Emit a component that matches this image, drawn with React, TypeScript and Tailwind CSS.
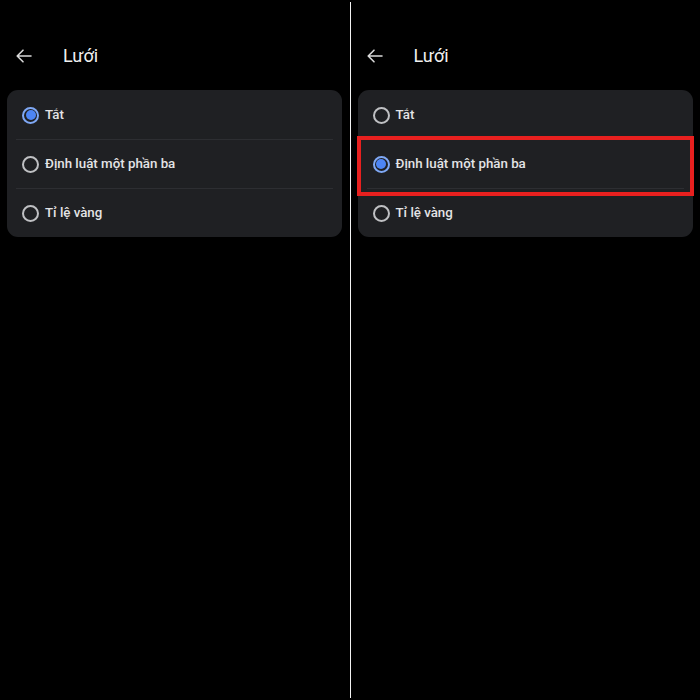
import React from "react";

function Radio({ checked }: { checked: boolean }) {
  if (checked) {
    return (
      <span className="flex h-[17px] w-[17px] shrink-0 items-center justify-center rounded-full border-2 border-[#7fa8f5]">
        <span className="h-[10px] w-[10px] rounded-full bg-[#4d85f4]" />
      </span>
    );
  }
  return <span className="h-[17px] w-[17px] shrink-0 rounded-full border-2 border-[#bfc0c3]" />;
}

function Arrow() {
  return (
    <svg width="16" height="14" viewBox="0 0 16 14" fill="none" stroke="#d9d9d9" strokeWidth="1.6" strokeLinecap="round" strokeLinejoin="round">
      <path d="M15 7H1.5M7 1.2L1.2 7L7 12.8" />
    </svg>
  );
}

const options = ["Tắt", "Định luật một phần ba", "Tỉ lệ vàng"];

function Panel({ selected, highlight }: { selected: number; highlight: boolean }) {
  return (
    <div className="flex w-[350px] flex-col">
      <div className="flex h-[68px] items-end pl-[16px]">
        <div className="flex h-[24px] items-center">
          <Arrow />
          <span className="ml-[31px] text-[18px] leading-none text-[#f0f0f0]">Lưới</span>
        </div>
      </div>
      <div className="ml-[7px] mt-[22px] w-[335px] rounded-[11px] bg-[#1f2023]">
        {options.map((o, i) => (
          <div key={o} className="relative">
            {i > 0 && <div className="mx-[9px] h-px bg-[#2d2e32]" />}
            <div className={"flex items-center gap-[6px] pl-[15px] " + (i === 0 ? "h-[49px] pt-px" : "h-[48px]")}>
              <Radio checked={i === selected} />
              <span className="text-[13.3px] font-medium text-[#e4e4e6]">{o}</span>
            </div>
            {highlight && i === 1 && (
              <div className="pointer-events-none absolute left-[-1px] right-[-1px] top-[-3px] bottom-[-8px] border-[4px] border-[#e8201f]" />
            )}
          </div>
        ))}
      </div>
    </div>
  );
}

export default function App() {
  return (
    <div className="flex h-[700px] w-[700px] bg-black" style={{ fontFamily: "Roboto, 'Noto Sans', sans-serif" }}>
      <Panel selected={0} highlight={false} />
      <div className="mt-[2px] h-[696px] w-px bg-[#f2f2f2]" />
      <Panel selected={1} highlight={true} />
    </div>
  );
}
